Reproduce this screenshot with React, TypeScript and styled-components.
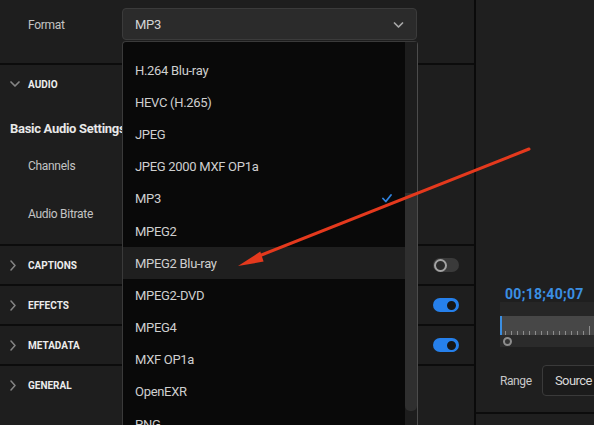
import React from "react";
import styled, { createGlobalStyle } from "styled-components";

const GlobalStyle = createGlobalStyle`
  html, body {
    margin: 0;
    padding: 0;
    background: #1e1e1e;
  }
  body {
    font-family: Roboto, "Liberation Sans", sans-serif;
    -webkit-font-smoothing: antialiased;
  }
  * {
    box-sizing: border-box;
  }
`;

const formats = [
  "H.264 Blu-ray",
  "HEVC (H.265)",
  "JPEG",
  "JPEG 2000 MXF OP1a",
  "MP3",
  "MPEG2",
  "MPEG2 Blu-ray",
  "MPEG2-DVD",
  "MPEG4",
  "MXF OP1a",
  "OpenEXR",
  "PNG",
];

const sections = [
  { name: "Captions", toggle: "off" },
  { name: "Effects", toggle: "on" },
  { name: "Metadata", toggle: "on" },
  { name: "General", toggle: null },
];

export default function App() {
  return (
    <>
      <GlobalStyle />
      <Screen>
        <LeftPanel>
          <FormatRow>
            <FieldLabel>Format</FieldLabel>
            <Select>
              <span>MP3</span>
              <ChevronDown color="#a8a8a8" width={11} />
            </Select>
          </FormatRow>

          <AudioSection>
            <SectionHeader>
              <IconSlot>
                <ChevronDown color="#858585" width={10} />
              </IconSlot>
              <SectionName>Audio</SectionName>
            </SectionHeader>
            <GroupTitle>Basic Audio Settings</GroupTitle>
            <FieldRow>
              <FieldLabel>Channels</FieldLabel>
              <Select />
            </FieldRow>
            <FieldRow>
              <FieldLabel>Audio Bitrate</FieldLabel>
              <Select />
            </FieldRow>
          </AudioSection>

          {sections.map((s) => (
            <CollapsedRow key={s.name}>
              <SectionHeader>
                <IconSlot>
                  <ChevronRight />
                </IconSlot>
                <SectionName>{s.name}</SectionName>
              </SectionHeader>
              <ToggleCell>
                {s.toggle && (
                  <Toggle $on={s.toggle === "on"}>
                    <Knob $on={s.toggle === "on"} />
                  </Toggle>
                )}
              </ToggleCell>
            </CollapsedRow>
          ))}

          <Dropdown>
            <OptionList>
              {formats.map((f) => (
                <Option key={f} $active={f === "MPEG2 Blu-ray"}>
                  <span>{f}</span>
                  {f === "MP3" && <Check />}
                </Option>
              ))}
            </OptionList>
            <ScrollTrack>
              <ScrollThumb />
            </ScrollTrack>
          </Dropdown>
        </LeftPanel>

        <Divider />

        <RightPanel>
          <Timecode>00;18;40;07</Timecode>
          <Ruler>
            <RulerBand />
            <RulerFoot>
              <Playhead />
            </RulerFoot>
          </Ruler>
          <RangeRow>
            <RangeLabel>Range</RangeLabel>
            <SourceBox>Source</SourceBox>
          </RangeRow>
          <BottomBar />
        </RightPanel>

        <Annotation viewBox="0 0 594 425">
          <line x1="529" y1="149" x2="259" y2="256" stroke="#e4391d" strokeWidth="3" strokeLinecap="round" />
          <polygon points="238,266 260.3,251.6 263.6,261.6" fill="#e4391d" />
        </Annotation>
      </Screen>
    </>
  );
}

function ChevronDown({ color, width }: { color: string; width: number }) {
  return (
    <svg width={width} height={6} viewBox="0 0 10 6" fill="none">
      <polyline points="1,1 5,5 9,1" stroke={color} strokeWidth="1.7" strokeLinecap="round" strokeLinejoin="round" />
    </svg>
  );
}

function ChevronRight() {
  return (
    <svg width={6} height={11} viewBox="0 0 6 11" fill="none">
      <polyline points="1,1 5,5.5 1,10" stroke="#858585" strokeWidth="1.5" strokeLinecap="round" strokeLinejoin="round" />
    </svg>
  );
}

function Check() {
  return (
    <svg width={10} height={9} viewBox="0 0 10 9" fill="none">
      <polyline points="1,4.5 3.8,7.5 9,1" stroke="#2f83e0" strokeWidth="1.8" strokeLinecap="round" strokeLinejoin="round" />
    </svg>
  );
}

const Screen = styled.div`
  position: relative;
  display: flex;
  width: 594px;
  height: 425px;
  overflow: hidden;
  background: #1e1e1e;
  color: #c6c6c6;
`;

const LeftPanel = styled.section`
  position: relative;
  display: flex;
  flex-direction: column;
  width: 474px;
  flex-shrink: 0;
  background: #1e1e1e;
`;

const Divider = styled.div`
  width: 2px;
  flex-shrink: 0;
  background: #0a0a0a;
`;

const FormatRow = styled.div`
  display: flex;
  align-items: flex-start;
  height: 65px;
  padding-top: 8px;
  border-bottom: 2px solid #0c0c0c;
`;

const FieldLabel = styled.div`
  width: 122px;
  flex-shrink: 0;
  padding: 1px 0 0 28px;
  font-size: 12px;
  line-height: 32px;
  letter-spacing: -0.3px;
  color: #c4c4c4;
`;

const Select = styled.div`
  display: flex;
  align-items: center;
  justify-content: space-between;
  width: 295px;
  height: 32px;
  padding: 1px 12px 0 12px;
  background: #2b2b2b;
  border: 1px solid #3b3b3b;
  border-radius: 4px;
  font-size: 13px;
  letter-spacing: -0.3px;
  color: #d4d4d4;
`;

const AudioSection = styled.div`
  display: flex;
  flex-direction: column;
  padding-bottom: 7px;
`;

const SectionHeader = styled.div`
  display: flex;
  align-items: center;
  height: 38px;
  padding-left: 10px;
`;

const IconSlot = styled.span`
  display: flex;
  align-items: center;
  width: 18px;
`;

const SectionName = styled.span`
  font-size: 10px;
  font-weight: 700;
  text-transform: uppercase;
  color: #ececec;
`;

const GroupTitle = styled.div`
  margin-top: 18px;
  padding-left: 10px;
  font-size: 13px;
  font-weight: 700;
  line-height: 16px;
  letter-spacing: -0.3px;
  color: #e8e8e8;
`;

const FieldRow = styled.div`
  display: flex;
  align-items: center;
  height: 48px;
  margin-top: 4px;

  & + & {
    margin-top: 0;
  }
`;

const CollapsedRow = styled.div`
  display: grid;
  grid-template-columns: 1fr 56px;
  align-items: center;
  height: 40px;
  border-top: 2px solid #0c0c0c;

  &:last-of-type {
    height: 42px;
    border-bottom: 2px solid #0c0c0c;
  }
`;

const ToggleCell = styled.div`
  display: flex;
  justify-content: center;
`;

const Toggle = styled.span<{ $on: boolean }>`
  display: flex;
  align-items: center;
  justify-content: ${(p) => (p.$on ? "flex-end" : "flex-start")};
  width: 26px;
  height: 14px;
  padding: 0 1px;
  border-radius: 7px;
  background: ${(p) => (p.$on ? "#2680eb" : "#3a3a3a")};
`;

const Knob = styled.span<{ $on: boolean }>`
  width: 13px;
  height: 13px;
  border-radius: 50%;
  border: 2px solid ${(p) => (p.$on ? "#2680eb" : "#a3a3a3")};
  background: ${(p) => (p.$on ? "#161616" : "#2a2a2a")};
`;

const Dropdown = styled.div`
  position: absolute;
  top: 41px;
  left: 122px;
  width: 296px;
  bottom: -20px;
  display: grid;
  grid-template-columns: 1fr 12px;
  background: #090909;
  border: 1px solid #3a3a3a;
  border-right-color: #4c4c4c;
  border-bottom: none;
  border-radius: 4px 4px 0 0;
`;

const OptionList = styled.div`
  display: flex;
  flex-direction: column;
  padding-top: 12px;
`;

const Option = styled.div<{ $active: boolean }>`
  display: flex;
  align-items: center;
  justify-content: space-between;
  flex-shrink: 0;
  height: 32.2px;
  padding: 0 13px 0 12px;
  background: ${(p) => (p.$active ? "#1f1f1f" : "transparent")};
  font-size: 13px;
  letter-spacing: -0.3px;
  color: #cfcfcf;
`;

const ScrollTrack = styled.div`
  padding-top: 151px;
  background: #1d1d1d;
`;

const ScrollThumb = styled.div`
  height: 218px;
  border-radius: 0 0 5px 5px;
  background: #2f2f2f;
`;

const RightPanel = styled.section`
  flex: 1;
  display: flex;
  flex-direction: column;
  justify-content: flex-end;
  padding-left: 24px;
  background: #1f1f1f;
  overflow: hidden;
`;

const Timecode = styled.div`
  font-size: 14px;
  font-weight: 700;
  line-height: 16px;
  letter-spacing: 0.3px;
  padding-left: 5px;
  color: #3b8fe3;
`;

const Ruler = styled.div`
  display: flex;
  flex-direction: column;
  flex-shrink: 0;
  width: 110px;
  height: 45px;
  padding-top: 14px;
  background: #262626;
`;

const RulerBand = styled.div`
  height: 19px;
  border-left: 2px solid #3b8fe3;
  background-color: #474747;
  background-image: linear-gradient(#8c8c8c, #8c8c8c),
    repeating-linear-gradient(to right, transparent 0 3px, #8c8c8c 3px 4px, transparent 4px 6px);
  background-size: 1px 9px, 100% 4px;
  background-position: 87px bottom, left bottom;
  background-repeat: no-repeat;
`;

const RulerFoot = styled.div`
  display: flex;
  align-items: center;
  height: 12px;
  padding-left: 3px;
  background: #2b2b2b;
`;

const Playhead = styled.span`
  width: 9px;
  height: 9px;
  border-radius: 50%;
  border: 2px solid #8d8d8d;
  background: #333;
`;

const RangeRow = styled.div`
  display: flex;
  align-items: center;
  margin-top: 18px;
`;

const RangeLabel = styled.span`
  width: 42px;
  flex-shrink: 0;
  font-size: 12px;
  letter-spacing: -0.4px;
  color: #c8c8c8;
`;

const SourceBox = styled.div`
  display: flex;
  align-items: center;
  flex-shrink: 0;
  width: 80px;
  height: 31px;
  padding-left: 12px;
  border: 1px solid #3a3a3a;
  border-radius: 4px;
  background: #1b1b1b;
  font-size: 13px;
  letter-spacing: -0.6px;
  color: #d8d8d8;
`;

const BottomBar = styled.div`
  flex-shrink: 0;
  height: 13px;
  margin-top: 16px;
  margin-left: -24px;
  border-top: 2px solid #0c0c0c;
`;

const Annotation = styled.svg`
  position: absolute;
  inset: 0;
  width: 594px;
  height: 425px;
  pointer-events: none;
`;
